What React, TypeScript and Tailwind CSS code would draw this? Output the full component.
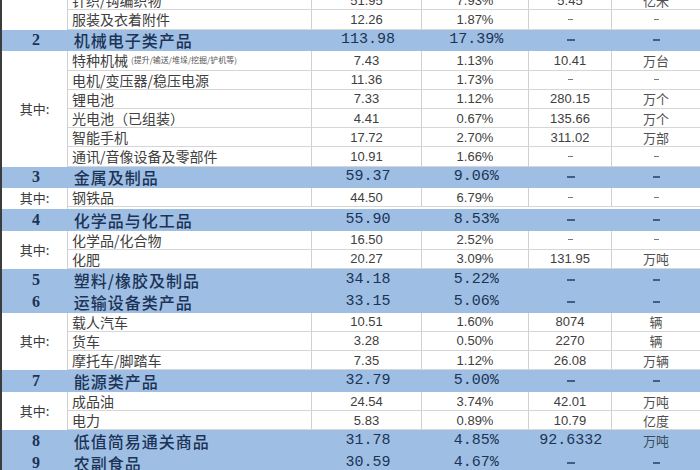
import React from "react";

type Sub = { name: string; note?: string; v: string; p: string; q: string; u: string };
type Cat = { n: string; name: string; v: string; p: string; q?: string; u?: string };

type Block = { kind: "cat"; cat: Cat } | { kind: "group"; label: string; rows: Sub[] };

const blocks: Block[] = [
  {
    kind: "group",
    label: "",
    rows: [
      { name: "针织/钩编织物", v: "51.95", p: "7.93%", q: "5.45", u: "亿米" },
      { name: "服装及衣着附件", v: "12.26", p: "1.87%", q: "-", u: "-" },
    ],
  },
  { kind: "cat", cat: { n: "2", name: "机械电子类产品", v: "113.98", p: "17.39%" } },
  {
    kind: "group",
    label: "其中:",
    rows: [
      { name: "特种机械", note: "(提升/输送/堆垛/挖掘/铲机等)", v: "7.43", p: "1.13%", q: "10.41", u: "万台" },
      { name: "电机/变压器/稳压电源", v: "11.36", p: "1.73%", q: "-", u: "-" },
      { name: "锂电池", v: "7.33", p: "1.12%", q: "280.15", u: "万个" },
      { name: "光电池（已组装）", v: "4.41", p: "0.67%", q: "135.66", u: "万个" },
      { name: "智能手机", v: "17.72", p: "2.70%", q: "311.02", u: "万部" },
      { name: "通讯/音像设备及零部件", v: "10.91", p: "1.66%", q: "-", u: "-" },
    ],
  },
  { kind: "cat", cat: { n: "3", name: "金属及制品", v: "59.37", p: "9.06%" } },
  {
    kind: "group",
    label: "其中:",
    rows: [{ name: "钢铁品", v: "44.50", p: "6.79%", q: "-", u: "-" }],
  },
  { kind: "cat", cat: { n: "4", name: "化学品与化工品", v: "55.90", p: "8.53%" } },
  {
    kind: "group",
    label: "其中:",
    rows: [
      { name: "化学品/化合物", v: "16.50", p: "2.52%", q: "-", u: "-" },
      { name: "化肥", v: "20.27", p: "3.09%", q: "131.95", u: "万吨" },
    ],
  },
  { kind: "cat", cat: { n: "5", name: "塑料/橡胶及制品", v: "34.18", p: "5.22%" } },
  { kind: "cat", cat: { n: "6", name: "运输设备类产品", v: "33.15", p: "5.06%" } },
  {
    kind: "group",
    label: "其中:",
    rows: [
      { name: "载人汽车", v: "10.51", p: "1.60%", q: "8074", u: "辆" },
      { name: "货车", v: "3.28", p: "0.50%", q: "2270", u: "辆" },
      { name: "摩托车/脚踏车", v: "7.35", p: "1.12%", q: "26.08", u: "万辆" },
    ],
  },
  { kind: "cat", cat: { n: "7", name: "能源类产品", v: "32.79", p: "5.00%" } },
  {
    kind: "group",
    label: "其中:",
    rows: [
      { name: "成品油", v: "24.54", p: "3.74%", q: "42.01", u: "万吨" },
      { name: "电力", v: "5.83", p: "0.89%", q: "10.79", u: "亿度" },
    ],
  },
  { kind: "cat", cat: { n: "8", name: "低值简易通关商品", v: "31.78", p: "4.85%", q: "92.6332", u: "万吨" } },
  { kind: "cat", cat: { n: "9", name: "农副食品", v: "30.59", p: "4.67%" } },
];

function CatRow({ c }: { c: Cat }) {
  return (
    <div className="flex h-[21.8px] items-center bg-[#9ebfe3] text-[#1c3357]">
      <div className="w-[68px] text-center font-[family-name:'Liberation_Serif',serif] text-[16px] font-bold leading-[18px]">
        {c.n}
      </div>
      <div className="w-[244px] pl-[4px] font-[family-name:'Noto_Sans_CJK_SC',sans-serif] text-[16px] font-medium leading-[18px] tracking-[1px]">
        {c.name}
      </div>
      <div className="w-[110px] text-center font-[family-name:'Liberation_Mono',monospace] text-[15px] leading-[18px]">
        {c.v}
      </div>
      <div className="w-[107px] text-center font-[family-name:'Liberation_Mono',monospace] text-[15px] leading-[18px]">
        {c.p}
      </div>
      <div className="flex w-[83px] items-center justify-center">
        {c.q ? (
          <span className="font-[family-name:'Liberation_Mono',monospace] text-[15px] leading-[18px]">{c.q}</span>
        ) : (
          <span className="h-[2px] w-[8px] bg-[#3d5f8a]" />
        )}
      </div>
      <div className="flex w-[88px] items-center justify-center">
        {c.u ? (
          <span className="font-[family-name:'Noto_Sans_CJK_SC',sans-serif] text-[13px] leading-[16px] text-[#3a4a60]">
            {c.u}
          </span>
        ) : (
          <span className="h-[2px] w-[7px] bg-[#3d5f8a]" />
        )}
      </div>
    </div>
  );
}

function Dash() {
  return <span className="h-[1px] w-[5px] bg-[#777]" />;
}

function SubRow({ r }: { r: Sub }) {
  return (
    <div className="flex h-[19.2px] items-center border-b border-[#d6d6d6] text-[#404040]">
      <div className="flex h-full w-[244px] items-center border-r border-[#d0d0d0] pl-[4px] font-[family-name:'Noto_Sans_CJK_SC',sans-serif]">
        <span className="text-[14px] leading-[16px]">{r.name}</span>
        {r.note && <span className="ml-[3px] text-[8px] leading-[10px] text-[#555]">{r.note}</span>}
      </div>
      <div className="flex h-full w-[110px] items-center justify-center border-r border-[#d0d0d0] font-[family-name:'Liberation_Sans',sans-serif] text-[13px] leading-[15px]">
        {r.v}
      </div>
      <div className="flex h-full w-[107px] items-center justify-center border-r border-[#d0d0d0] font-[family-name:'Liberation_Sans',sans-serif] text-[13px] leading-[15px]">
        {r.p}
      </div>
      <div className="flex h-full w-[83px] items-center justify-center border-r border-[#d0d0d0] font-[family-name:'Liberation_Sans',sans-serif] text-[13px] leading-[15px]">
        {r.q === "-" ? <Dash /> : r.q}
      </div>
      <div className="flex h-full w-[88px] items-center justify-center font-[family-name:'Noto_Sans_CJK_SC',sans-serif] text-[13px] leading-[15px] text-[#505050]">
        {r.u === "-" ? <Dash /> : r.u}
      </div>
    </div>
  );
}

function Group({ label, rows }: { label: string; rows: Sub[] }) {
  return (
    <div className="flex">
      <div className="flex w-[68px] items-center justify-center border-r border-[#d0d0d0] pb-[1px] font-[family-name:'Noto_Sans_CJK_SC',sans-serif] text-[13px] text-[#3a3a3a]">
        {label}
      </div>
      <div className="flex flex-1 flex-col">
        {rows.map((r, i) => (
          <SubRow key={i} r={r} />
        ))}
      </div>
    </div>
  );
}

export default function App() {
  return (
    <div className="h-[470px] w-[700px] overflow-hidden border-l-2 border-[#3c3c3c] bg-white">
      <div className="mt-[-8.8px] w-[698px]">
        {blocks.map((b, i) =>
          b.kind === "cat" ? <CatRow key={i} c={b.cat} /> : <Group key={i} label={b.label} rows={b.rows} />
        )}
      </div>
    </div>
  );
}
